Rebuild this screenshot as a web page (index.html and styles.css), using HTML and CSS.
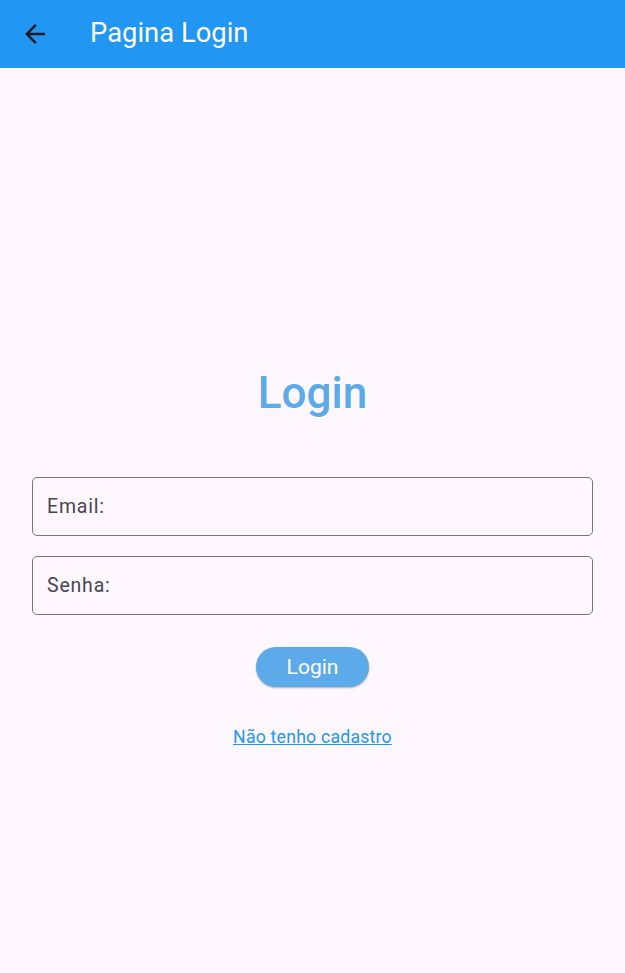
FILE: index.html
```html
<!DOCTYPE html>
<html lang="pt">
<head>
<meta charset="utf-8">
<title>Pagina Login</title>
<link rel="stylesheet" href="styles.css">
</head>
<body>
<header class="appbar">
  <button class="back" aria-label="Voltar">
    <svg viewBox="0 0 24 24" width="30" height="30"><path d="M20 11H7.83l5.59-5.59L12 4l-8 8 8 8 1.41-1.41L7.83 13H20v-2z" fill="#1d1b20"/></svg>
  </button>
  <h1 class="title">Pagina Login</h1>
</header>
<main class="content">
  <h2 class="heading">Login</h2>
  <div class="field"><span class="label">Email:</span></div>
  <div class="field"><span class="label">Senha:</span></div>
  <button class="btn">Login</button>
  <a class="link" href="#">Não tenho cadastro</a>
</main>
</body>
</html>
```
FILE: styles.css
```css
* { box-sizing: border-box; }
html, body { margin: 0; padding: 0; }
body {
  background: #fef7ff;
  font-family: Roboto, "Noto Sans", sans-serif;
  width: 625px;
  height: 973px;
  overflow: hidden;
}
.appbar {
  height: 68px;
  background: #2196f3;
  display: flex;
  align-items: center;
  padding-left: 20px;
}
.back {
  width: 30px;
  height: 30px;
  padding: 0;
  border: 0;
  background: none;
  display: flex;
  align-items: center;
  justify-content: center;
}
.title {
  margin: 0 0 0 40px;
  font-size: 27.4px;
  font-weight: 400;
  color: #ffffff;
  line-height: 1;
}
.content {
  display: flex;
  flex-direction: column;
  align-items: center;
  padding: 0 32px 0 32px;
}
.heading {
  margin: 302px 0 0 0;
  font-size: 44px;
  font-weight: 500;
  color: #5daaea;
  line-height: 46px;
  height: 46px;
}
.field {
  width: 561px;
  height: 59px;
  border: 1.3px solid #79747e;
  border-radius: 5px;
  display: flex;
  align-items: center;
  padding-left: 14px;
  margin-top: 20px;
}
.heading + .field { margin-top: 61px; }
.label {
  font-size: 19.5px;
  color: #49454f;
  letter-spacing: 0.8px;
}
.btn {
  margin-top: 32px;
  width: 113px;
  height: 40px;
  border: 0;
  border-radius: 20px;
  background: #5daaea;
  color: #ffffff;
  font-family: Roboto, sans-serif;
  font-size: 21px;
  font-weight: 400;
  box-shadow: 0 1px 2px rgba(0,0,0,0.3);
}
.link {
  margin-top: 40px;
  font-size: 17.7px;
  color: #2196f3;
  text-decoration: underline;
  letter-spacing: 0.2px;
}
```
